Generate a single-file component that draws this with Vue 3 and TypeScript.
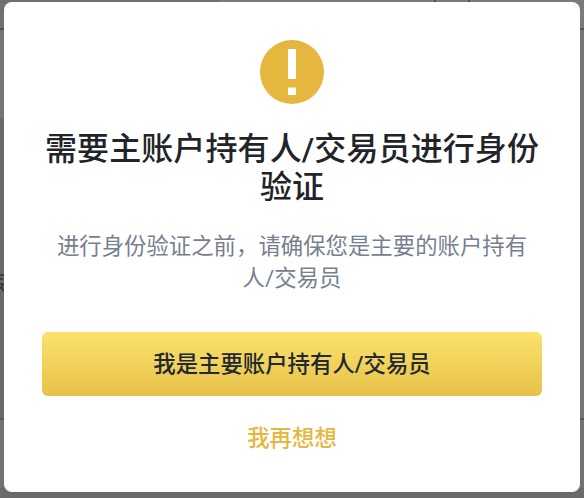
<!-- IdentityVerifyDialog.vue -->
<template>
  <div class="page">
    <div class="page-content" aria-hidden="true">
      <div class="page-header">
        <span class="header-main"></span>
        <span class="header-tab"></span>
        <span class="header-rest"></span>
      </div>
      <div class="page-intro"></div>
      <div class="page-banner">
        <svg class="banner-mark" viewBox="0 0 4 20">
          <path
            d="M0 3h4M0 7h3M0 12h4M0 15l4 4M2 12v4"
            fill="none"
            stroke="#30343a"
            stroke-width="1.6"
          />
        </svg>
      </div>
      <div class="page-footer"></div>
    </div>

    <div v-show="isVisible" class="modal-mask">
      <div class="modal" role="dialog" aria-modal="true">
        <svg class="modal-icon" viewBox="0 0 64 64">
          <circle cx="32" cy="32" r="32" fill="#e6b73f" />
          <path d="M28 9h8v30h-8zM28 47.5h8v7.5h-8z" fill="#fff" />
        </svg>
        <h2 class="modal-title">{{ title }}</h2>
        <p class="modal-desc">{{ description }}</p>
        <button class="btn-primary" type="button" @click="onConfirm">
          {{ confirmText }}
        </button>
        <button class="btn-link" type="button" @click="close">
          {{ cancelText }}
        </button>
      </div>
    </div>
  </div>
</template>

<script setup lang="ts">
import { ref } from "vue";

const emit = defineEmits<{
  (e: "confirm"): void;
  (e: "cancel"): void;
}>();

const title = "需要主账户持有人/交易员进行身份验证";
const description = "进行身份验证之前，请确保您是主要的账户持有人/交易员";
const confirmText = "我是主要账户持有人/交易员";
const cancelText = "我再想想";

const isVisible = ref(true);

const onConfirm = () => {
  isVisible.value = false;
  emit("confirm");
};

const close = () => {
  isVisible.value = false;
  emit("cancel");
};
</script>

<style>
body {
  margin: 0;
}
</style>

<style scoped>
.page {
  position: relative;
  height: 100vh;
  overflow: hidden;
  font-family: Roboto, "Noto Sans CJK SC", sans-serif;
}

.page-content {
  display: flex;
  flex-direction: column;
  height: 100%;
  background: #747574;
}

.page-header {
  display: flex;
  flex: 0 0 28px;
  background: #7b7979;
  border-bottom: 2px solid #505252;
}

.header-main {
  width: 434px;
  background: linear-gradient(90deg, #707070 220px, #7b7979 220px);
}

.header-tab {
  width: 32px;
  border-left: 2px solid #505050;
  border-right: 2px solid #505050;
}

.header-rest {
  flex: 1;
}

.page-intro {
  flex: 0 0 88px;
}

.page-banner {
  flex: 0 0 300px;
  background: linear-gradient(90deg, #696969 4px, #747574 4px);
  border-bottom: 2px solid #585959;
}

/* trailing strokes of the label that runs under the dialog */
.banner-mark {
  display: block;
  width: 4px;
  height: 20px;
  margin-top: 154px;
}

.page-footer {
  flex: 1;
  background: linear-gradient(#727370 68px, #6a6a6a 68px);
}

.modal-mask {
  position: absolute;
  inset: 0;
  display: flex;
  align-items: flex-start;
  justify-content: center;
  padding-top: 2px;
}

.modal {
  display: flex;
  flex-direction: column;
  align-items: center;
  box-sizing: border-box;
  width: 576px;
  height: 490px;
  padding: 38px 38px 0;
  background: #fff;
  border-radius: 8px;
}

.modal-icon {
  flex: none;
  width: 64px;
  height: 64px;
}

.modal-title {
  margin: 26px 0 0;
  color: #212429;
  font-size: 32px;
  font-weight: 500;
  line-height: 38.4px;
  letter-spacing: 0.1px;
  text-align: center;
}

.modal-desc {
  margin: 23px 0 0;
  padding: 0 14px;
  color: #76808f;
  font-size: 22.4px;
  line-height: 32px;
  text-align: center;
}

.btn-primary,
.btn-link {
  flex: none;
  padding: 0;
  border: none;
  font-family: inherit;
  font-size: 22.4px;
  font-weight: 500;
  cursor: pointer;
}

.btn-primary {
  width: 100%;
  height: 64px;
  margin-top: 38px;
  color: #212833;
  background: linear-gradient(#fce26d, #e6c148);
  border-radius: 6px;
  line-height: 64px;
}

.btn-link {
  height: 32px;
  margin-top: 26px;
  color: #e6b73f;
  background: transparent;
  line-height: 32px;
}
</style>
